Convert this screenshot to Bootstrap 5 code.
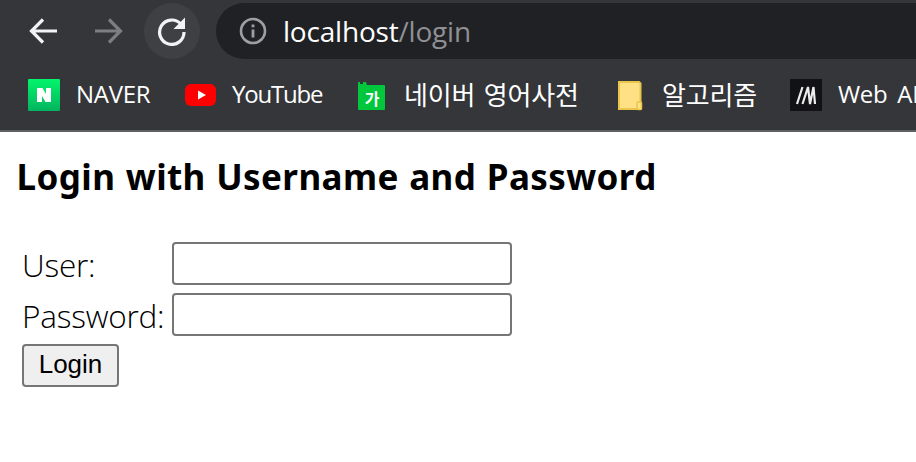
<!DOCTYPE html>
<html lang="en">
<head>
<meta charset="utf-8">
<title>Login</title>
<link rel="stylesheet" href="https://cdn.jsdelivr.net/npm/bootstrap@5.3.0/dist/css/bootstrap.min.css">
<style>
html,body{height:100%;overflow:hidden;background:#fff}
body{font-family:"Noto Sans","Noto Sans CJK KR",sans-serif;color:#000}
.chrome-bar{height:132px;background:#35363a;border-bottom:2px solid #5f6062;color:#fff}
.tool-row{height:59px;padding-top:3px}
.tool-btn{width:56px;height:56px;flex:none;border-radius:50%}
.tool-btn.hovered{background:#3f4044}
.back-slot{margin-left:16px}
.fwd-slot{margin-left:8px}
.reload-slot{margin-left:8px}
.omni{flex:1;height:56px;margin-left:16px;margin-right:-60px;background:#202124;border-radius:28px 0 0 28px;padding-left:23px;font-size:28px;font-family:"Open Sans","Noto Sans",sans-serif;letter-spacing:-.2px}
.omni .url-host{margin-left:16px;color:#fff}
.omni .url-path{color:#8e9094}
.marks{height:71px;padding-left:28px;padding-top:1px;white-space:nowrap;overflow:hidden;font-family:"Open Sans","Noto Sans CJK KR",sans-serif;font-size:24px;letter-spacing:-.3px}
.mark-item{flex:none;display:flex;align-items:center}
.mark-item svg{flex:none}
.mark-label{margin-left:16px;margin-top:-2px}
.ko-label{font-family:"Noto Sans CJK KR",sans-serif;font-size:26px;letter-spacing:-.2px;font-weight:400;margin-top:-3px;margin-left:14px;word-spacing:3px}
.folder-label{margin-left:12px}
.yt-label{letter-spacing:-1.2px;margin-left:15px}
.web-label{word-spacing:4px}
.m1{width:157px}.m2{width:173px}.m3{width:260px}.m4{width:172px}
.login-wrap{padding:0 0 0 16.5px}
.login-title{font-size:35px;font-weight:700;line-height:48px;margin:21px 0 41px;font-family:"Noto Sans","Noto Sans CJK KR",sans-serif;letter-spacing:.4px;word-spacing:1px}
.login-form{padding-left:5.5px;font-size:31.5px;line-height:40px;font-weight:300;font-family:"Open Sans","Noto Sans",sans-serif;letter-spacing:-.2px}
.form-line{display:flex;align-items:center;height:43px;margin-bottom:8px}
.form-cap{width:149.5px;flex:none;padding-top:3px}
.plain-input{width:340.5px;height:43px;border:2px solid #767676;border-radius:4px;background:#fff;padding:0 3px}
.plain-submit{width:97px;height:43px;padding:0 0 3px;border:2px solid #767676;border-radius:4px;background:#efefef;color:#000;font-family:"Liberation Sans",Arial,sans-serif;font-size:26px;line-height:1;letter-spacing:0}
</style>
</head>
<body>
<div class="chrome-bar">
  <div class="tool-row d-flex align-items-center">
    <div class="tool-btn back-slot d-flex align-items-center justify-content-center">
      <svg width="30" height="28" viewBox="0 0 30 28" fill="none" stroke="#f1f3f4" stroke-width="3.2"><path d="M28 14H3M14 2.5 2.5 14 14 25.5"/></svg>
    </div>
    <div class="tool-btn fwd-slot d-flex align-items-center justify-content-center">
      <svg width="30" height="28" viewBox="0 0 30 28" fill="none" stroke="#7d7e80" stroke-width="3.2"><path d="M2 14h25M16 2.5 27.5 14 16 25.5"/></svg>
    </div>
    <div class="tool-btn hovered reload-slot d-flex align-items-center justify-content-center">
      <svg width="30" height="30" viewBox="0 0 30 30"><path d="M24 8.2A12.2 12.2 0 1 0 27 16" fill="none" stroke="#f1f3f4" stroke-width="3.2"/><path d="M28 1.5V13H16.5z" fill="#f1f3f4"/></svg>
    </div>
    <div class="omni d-flex align-items-center">
      <svg width="28" height="28" viewBox="0 0 28 28"><circle cx="14" cy="14" r="12" fill="none" stroke="#9aa0a6" stroke-width="2.6"/><rect x="12.6" y="12.5" width="2.8" height="8" fill="#9aa0a6"/><rect x="12.6" y="7.5" width="2.8" height="2.8" fill="#9aa0a6"/></svg>
      <span class="url-host">localhost</span><span class="url-path">/login</span>
    </div>
  </div>
  <div class="marks d-flex align-items-center">
    <div class="mark-item m1">
      <svg width="32" height="32" viewBox="0 0 32 32"><defs><linearGradient id="ng" x1="0" y1="0" x2="0" y2="1"><stop offset="0" stop-color="#03f56b"/><stop offset="1" stop-color="#03b45f"/></linearGradient></defs><rect width="32" height="32" rx="1" fill="url(#ng)"/><path d="M9 9h5.5l3.5 6V9h5v14h-5.5L14 17v6H9z" fill="#fff"/></svg>
      <span class="mark-label">NAVER</span>
    </div>
    <div class="mark-item m2">
      <svg width="32" height="32" viewBox="0 0 32 32"><rect x="0" y="5" width="31" height="22" rx="6" fill="#f00"/><path d="M13 11.500 21 16 13 20.500z" fill="#fff"/></svg>
      <span class="mark-label yt-label">YouTube</span>
    </div>
    <div class="mark-item m3">
      <svg width="32" height="32" viewBox="0 0 32 32"><path d="M0 3h2v2h3V3h3l1 3h17a1 1 0 0 1 1 1v23a1 1 0 0 1-1 1H1a1 1 0 0 1-1-1z" fill="#00c73c"/><text x="14" y="26" fill="#fff" font-size="16" font-weight="700" text-anchor="middle" font-family="Noto Sans CJK KR">가</text></svg>
      <span class="mark-label ko-label">네이버 영어사전</span>
    </div>
    <div class="mark-item m4">
      <svg width="32" height="32" viewBox="0 0 32 32"><path d="M1 3h20l1.500 1.500V30H1z" fill="#ffe084" stroke="#e9c54a" stroke-width="2"/><rect x="19" y="23" width="4.500" height="7.500" rx="1" fill="#ffe084" stroke="#e9c54a" stroke-width="1.500"/></svg>
      <span class="mark-label ko-label folder-label">알고리즘</span>
    </div>
    <div class="mark-item">
      <svg width="32" height="32" viewBox="0 0 32 32"><rect width="32" height="32" fill="#121216"/><path d="M7 25 12.500 8M12.500 25 18 8 20 25 23.500 8 25 25" fill="none" stroke="#ececec" stroke-width="2.200"/></svg>
      <span class="mark-label web-label">Web API</span>
    </div>
  </div>
</div>
<div class="login-wrap">
  <h3 class="login-title">Login with Username and Password</h3>
  <form class="login-form" onsubmit="return false">
    <div class="form-line"><label class="form-cap" for="u">User:</label><input class="plain-input" id="u" type="text"></div>
    <div class="form-line"><label class="form-cap" for="p">Password:</label><input class="plain-input" id="p" type="password"></div>
    <div class="form-line"><button class="plain-submit" type="submit">Login</button></div>
  </form>
</div>
<script src="https://cdn.jsdelivr.net/npm/bootstrap@5.3.0/dist/js/bootstrap.bundle.min.js"></script>
</body>
</html>
